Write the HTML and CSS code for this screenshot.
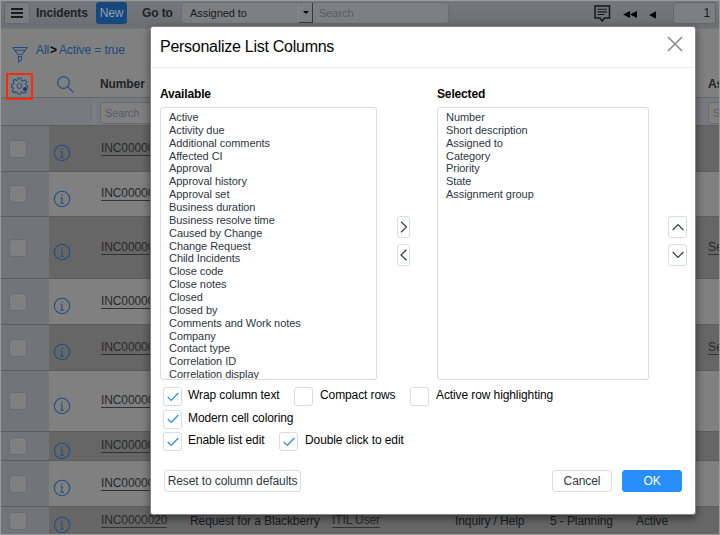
FILE: index.html
```html
<!DOCTYPE html>
<html lang="en">
<head>
<meta charset="utf-8">
<title>Incidents</title>
<link rel="stylesheet" href="styles.css">
</head>
<body>
<svg class="defs" width="0" height="0">
  <symbol id="info" viewBox="0 0 18 18"><circle cx="9" cy="9" r="7.7" fill="none" stroke="#214f80" stroke-width="1.1"/><path d="M7.5 7.7H9V13.2M7 13.2H11M9 4.6V6" fill="none" stroke="#214f80" stroke-width="1.1"/></symbol>
  <symbol id="check" viewBox="0 0 12 10"><path d="M.8 5L4.2 8.4L11.3 1" fill="none" stroke="#278efc" stroke-width="1.3"/></symbol>
</svg>
<main class="page">
  <header class="toolbar">
    <button class="menu"><i></i><i></i><i></i></button>
    <b class="title">Incidents</b>
    <button class="new">New</button>
    <b class="goto">Go to</b>
    <div class="search-group"><span class="select">Assigned to</span><span class="arrow"></span><span class="query">Search</span></div>
    <div class="pager">
      <svg class="comment" width="55" height="18" viewBox="0 0 55 18"><path d="M1 1H15.5V13H10.5L8.2 16L6 13H1Z" fill="none" stroke="#171717" stroke-width="1.5"/><path d="M3.5 4.3H13M3.5 6.9H13M3.5 9.5H10.5" stroke="#171717" stroke-width="1.1"/><path d="M36 6V13L29 9.5ZM43 6V13L36 9.5Z"/></svg>
      <svg class="prev" width="7" height="8"><path d="M7 .3V7.7L0 4Z"/></svg>
      <span class="page-no">1</span>
    </div>
  </header>
  <nav class="crumbs">
    <svg width="16" height="18" viewBox="0 0 16 18" fill="none" stroke="#214f80"><path d="M.7 1.5H15.3L10 8.5H6L.7 1.5M2.7 4.2H13.3M6.5 10.5H9.5V14L6.5 16Z" stroke-width="1.1"/></svg>
    <span>All</span><b>&gt;</b><span>Active = true</span>
  </nav>
  <div class="head">
    <span class="gear"><svg width="17" height="18" viewBox="0 0 17 18" fill="none" stroke="#214f80"><path d="M7 1.2H10L10.5 3.4L12 4.1L14 2.9L15.8 5L14.5 6.8L15 8.2L16.5 8.8V11L14.5 11.5L14 13L15 14.8L13.1 16.4L11.3 15L9.8 15.5L9.2 17H6.8L6.2 15.3L4.8 14.7L3 15.8L1.3 13.9L2.4 12L2 10.5L.6 10V7.7L2.3 7.1L3 5.7L2 3.9L3.7 2.3L5.4 3.4L6.6 3Z" stroke-width="1.1"/><circle cx="8.3" cy="9" r="2.4"/><circle cx="14" cy="12" r="2.1" fill="#123c6a" stroke="none"/></svg></span>
    <svg class="lens" width="17" height="17" viewBox="0 0 17 17" fill="none" stroke="#214f80" stroke-width="1.2"><circle cx="6.5" cy="6.5" r="5.8"/><path d="M10.8 10.8L16.3 16.3"/></svg>
    <b>Number</b><b>As</b>
  </div>
  <div class="filters"><span></span><span><i class="field">Search</i><i class="field last">S</i></span></div>
  <section class="rows">
    <div class="row odd"><span class="pick"><i></i></span><svg class="info"><use href="#info"/></svg><u>INC0000060</u></div>
    <div class="row"><span class="pick"><i></i></span><svg class="info"><use href="#info"/></svg><u>INC0000055</u></div>
    <div class="row odd"><span class="pick"><i></i></span><svg class="info"><use href="#info"/></svg><u>INC0000054</u><u class="group">Se</u></div>
    <div class="row"><span class="pick"><i></i></span><svg class="info"><use href="#info"/></svg><u>INC0000053</u></div>
    <div class="row odd"><span class="pick"><i></i></span><svg class="info"><use href="#info"/></svg><u>INC0000052</u><u class="group">Se</u></div>
    <div class="row"><span class="pick"><i></i></span><svg class="info"><use href="#info"/></svg><u>INC0000051</u></div>
    <div class="row odd"><span class="pick"><i></i></span><svg class="info"><use href="#info"/></svg><u>INC0000050</u></div>
    <div class="row"><span class="pick"><i></i></span><svg class="info"><use href="#info"/></svg><u>INC0000049</u></div>
    <div class="row odd"><span class="pick"><i></i></span><svg class="info"><use href="#info"/></svg><u>INC0000020</u><span>Request for a Blackberry</span><u>ITIL User</u><span>Inquiry / Help</span><span>5 - Planning</span><span>Active</span></div>
  </section>
</main>
<section class="modal">
  <header><h1>Personalize List Columns</h1><svg width="16" height="16" viewBox="0 0 16 16"><path d="M1 1L15 15M15 1L1 15" stroke="#8b8f97" stroke-width="1.7"/></svg></header>
  <div class="picker">
    <div><h2>Available</h2>
      <ul><li>Active</li><li>Activity due</li><li>Additional comments</li><li>Affected CI</li><li>Approval</li><li>Approval history</li><li>Approval set</li><li>Business duration</li><li>Business resolve time</li><li>Caused by Change</li><li>Change Request</li><li>Child Incidents</li><li>Close code</li><li>Close notes</li><li>Closed</li><li>Closed by</li><li>Comments and Work notes</li><li>Company</li><li>Contact type</li><li>Correlation ID</li><li>Correlation display</li></ul></div>
    <div class="buttons side">
      <button><svg width="8" height="12" viewBox="0 0 8 12"><path d="M1 .7L6.5 6L1 11.3"/></svg></button>
      <button><svg width="8" height="12" viewBox="0 0 8 12"><path d="M6.5 .7L1 6L6.5 11.3"/></svg></button>
    </div>
    <div><h2>Selected</h2>
      <ul><li>Number</li><li>Short description</li><li>Assigned to</li><li>Category</li><li>Priority</li><li>State</li><li>Assignment group</li></ul></div>
    <div class="buttons order">
      <button><svg width="12" height="8" viewBox="0 0 12 8"><path d="M.7 7L6 1.5L11.3 7"/></svg></button>
      <button><svg width="12" height="8" viewBox="0 0 12 8"><path d="M.7 1L6 6.5L11.3 1"/></svg></button>
    </div>
  </div>
  <div class="options">
    <div><span class="box"><svg><use href="#check"/></svg></span><label class="wrap">Wrap column text</label><span class="box"></span><label class="compact">Compact rows</label><span class="box"></span><label>Active row highlighting</label></div>
    <div><span class="box"><svg><use href="#check"/></svg></span><label>Modern cell coloring</label></div>
    <div><span class="box"><svg><use href="#check"/></svg></span><label class="edit">Enable list edit</label><span class="box"><svg><use href="#check"/></svg></span><label>Double click to edit</label></div>
  </div>
  <footer><button class="reset">Reset to column defaults</button><button class="cancel">Cancel</button><button class="ok">OK</button></footer>
</section>
</body>
</html>
```
FILE: styles.css
```css
* { box-sizing: border-box; }
body { margin: 0; width: 720px; height: 535px; overflow: hidden; position: relative; font: 12px/14px "Liberation Sans", Arial, sans-serif; letter-spacing: -.1px; color: #171b20; }
button { font: inherit; letter-spacing: inherit; padding: 0; margin: 0; }
svg { display: block; flex: none; }
i { font-style: normal; }
.defs { position: absolute; }
.page { width: 720px; height: 535px; border: 1px solid #9b9b9b; background: #808080; overflow: hidden; }
.toolbar { height: 28px; display: flex; align-items: center; background: linear-gradient(#75787c, #6b6e72); border-bottom: 1px solid #73767a; padding: 0 3px 3px 3px; white-space: nowrap; }
.menu { width: 26px; height: 22px; border: 1px solid #65686b; border-radius: 3px; background: #7b7d80; display: flex; flex-direction: column; align-items: center; justify-content: center; gap: 2px; }
.menu i { width: 12px; height: 2px; background: #171b20; }
.title { width: 60px; margin-left: 6px; color: #1d2228; }
.new { width: 31px; height: 22px; background: #14487f; color: #929eac; border: 0; border-radius: 3px; }
.goto { margin-left: 15px; width: 39px; color: #1d2228; }
.search-group { display: flex; align-items: center; height: 22px; width: 268px; background: #7e7f80; border: 1px solid #6a6c6e; border-radius: 3px; font-size: 11px; letter-spacing: -.05px; }
.select { width: 116px; padding-left: 8px; }
.arrow { width: 15px; height: 20px; display: flex; align-items: center; justify-content: center; border-right: 1px solid #36383a; border-bottom: 1px solid #36383a; border-left: 1px solid #898989; }
.arrow::after { content: ""; border: 3px solid transparent; border-top: 3px solid #050505; border-bottom: 0; }
.query { color: #5a5c60; padding-left: 6px; }
.pager { display: flex; align-items: center; margin-left: auto; }
.comment { margin: 2px 0 0 0; }
.prev { margin: 3px 17px 0 0; }
.page-no { width: 43px; height: 22px; border: 1px solid #65686b; border-radius: 3px; background: #7e7f80; padding: 3px 5px 0 0; text-align: right; }
.crumbs { height: 41px; display: flex; align-items: center; color: #1c487a; padding: 1px 0 0 11px; }
.crumbs svg { margin: 9px 8px 0 0; }
.crumbs b { margin: 0 2px 0 1px; color: #090909; }
.head { height: 28px; display: flex; align-items: center; border-bottom: 1px solid #65686b; color: #202428; white-space: nowrap; }
.gear { width: 27px; height: 27px; margin: 5px 24px 0 5px; border: 2px solid #fc2a09; display: flex; align-items: center; justify-content: center; flex: none; }
.lens { margin: 1px 26px 0 0; }
.head b { width: 608px; flex: none; }
.filters { height: 27px; display: flex; background: #777a7e; font-size: 11px; }
.filters > span:first-child { width: 94px; flex: none; border-right: 1px solid #818487; }
.filters > span:last-child { display: flex; padding: 4px 0 0 5px; }
.field { width: 90px; height: 22px; border: 1px solid #67696c; border-radius: 3px; background: #808080; padding: 3px 4px; color: #5a5c60; margin-right: 518px; flex: none; }
.field.last { margin: 0; width: 16px; }
.rows { display: grid; grid-template-rows: 46px 45px 62px 46px 46px 61px 29px 46px 28px; }
.row { display: grid; grid-template-columns: 48px 52px 89px 142px 123px 95px 86px 72px; align-items: center; background: #808080; border-top: 1px solid #5b5c5e; white-space: nowrap; overflow: hidden; }
.row.odd { background: #666; }
.pick { background: #717579; align-self: stretch; display: flex; align-items: center; padding-left: 8px; }
.pick i { width: 18px; height: 18px; border: 1px solid #696b6e; border-radius: 3px; background: #808080; }
.info { width: 18px; height: 18px; margin: 9px 0 0 4px; }
.row u { color: #292929; text-decoration: none; justify-self: start; line-height: 13px; border-bottom: 1px solid #333; }
.row .group { grid-column: 8; margin-left: 72px; }
.modal { position: absolute; left: 150px; top: 26px; width: 546px; height: 489px; background: #fff; border: 1px solid #858585; border-radius: 3px; box-shadow: 0 3px 8px rgba(0,0,0,.5); color: #050505; }
.modal header { height: 41px; border-bottom: 1px solid #e9e9e9; display: flex; justify-content: space-between; padding: 10px 12px 0 9px; }
.modal h1 { font-size: 16px; letter-spacing: -.27px; line-height: 20px; font-weight: 400; margin: 0; }
.modal header svg { margin-top: -1px; }
.picker { display: flex; padding: 18px 0 0 9px; }
h2 { margin: 0; font-size: 12px; letter-spacing: -.15px; line-height: 16px; height: 21px; }
ul { margin: 0; padding: 3px 0 0 8px; list-style: none; width: 217px; height: 273px; border: 1px solid #ddd; border-radius: 3px; overflow: hidden; color: #2e3740; font-size: 11px; letter-spacing: -.06px; line-height: 12.86px; }
.picker > div:nth-child(3) ul { width: 212px; }
.buttons { display: flex; flex-direction: column; gap: 6px; padding-top: 130px; }
.side { width: 60px; padding-left: 20px; }
.order { padding-left: 19px; }
.buttons button, .box, footer button { background: #fff; border: 1px solid #d9dce0; border-radius: 3px; display: flex; align-items: center; justify-content: center; }
.buttons button { width: 13px; height: 22px; }
.order button { width: 19px; }
.buttons path { fill: none; stroke: #343d47; stroke-width: 1.2; }
.options { padding: 7px 0 0 12px; }
.options > div { display: flex; height: 22.7px; white-space: nowrap; }
.box { width: 19px; height: 19px; flex: none; margin-right: 6px; }
.box svg { width: 12px; height: 10px; }
label { padding-top: 1px; }
label + .box + label { padding-left: 1px; }
.wrap { width: 106px; }
.options .compact { width: 91px; }
.edit { width: 91px; }
footer { display: flex; padding: 15px 0 0 13px; }
footer button { height: 22px; color: #2e3740; }
.reset { width: 137px; }
.cancel { width: 60px; margin-left: 251px; }
footer .ok { width: 60px; margin-left: 10px; background: #278efc; border-color: #278efc; color: #fff; }
```
